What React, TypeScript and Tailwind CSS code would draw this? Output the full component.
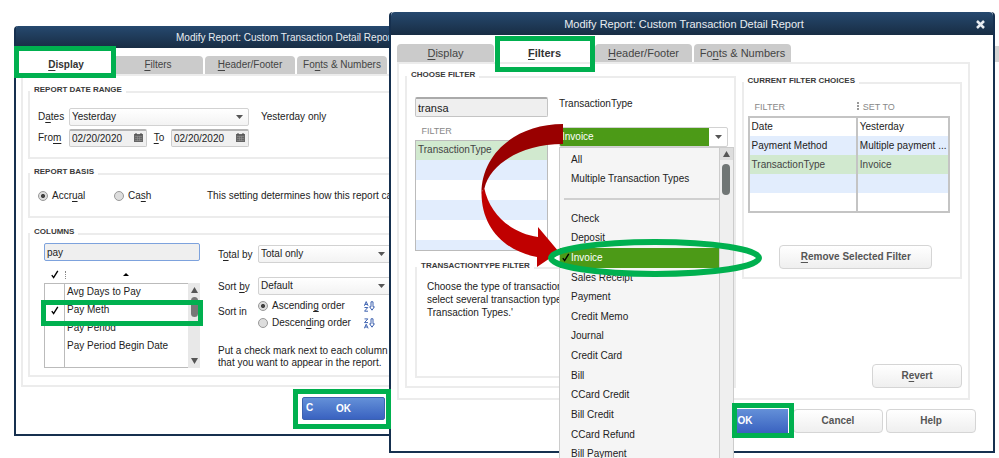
import type { ReactNode } from 'react'
import clsx from 'clsx'

interface GroupProps {
  title: string
  className?: string
  bodyClass: string
  children: ReactNode
}

function Group({ title, className = '', bodyClass, children }: GroupProps) {
  return (
    <fieldset className={clsx('min-w-0 border-2 border-[#ececec]', className)}>
      <legend className="px-1 pb-1 text-[8px] leading-3 font-bold text-[#3a3a3a]">{title}</legend>
      <div className={bodyClass}>{children}</div>
    </fieldset>
  )
}

// label text with its access key underlined
function Hot({ text, at }: { text: string; at: number }) {
  return (
    <>
      {text.slice(0, at)}
      <span className="underline underline-offset-2">{text[at]}</span>
      {text.slice(at + 1)}
    </>
  )
}

function Caret({ className = '' }: { className?: string }) {
  return (
    <svg viewBox="0 0 7 4" className={clsx('pointer-events-none h-1 w-[7px] fill-[#555]', className)}>
      <path d="M0 0h7L3.5 4z" />
    </svg>
  )
}

function Tick({ className = '' }: { className?: string }) {
  return (
    <svg viewBox="0 0 8 9" className={clsx('h-[9px] w-2 fill-none stroke-black', className)}>
      <path d="M.8 5.2 2.6 7.6 6.8.8" strokeWidth="1.4" />
    </svg>
  )
}

interface TabsProps {
  active: string
  tabClass: string
  frameClass: string
}

const tabs = [
  { label: 'Display', at: 0 },
  { label: 'Filters', at: 0 },
  { label: 'Header/Footer', at: 0 },
  { label: 'Fonts & Numbers', at: 2 },
]

function Tabs({ active, tabClass, frameClass }: TabsProps) {
  return (
    <div role="tablist" className="flex gap-0.5">
      {tabs.map((tab) => {
        const selected = tab.label === active
        return (
          <button
            key={tab.label}
            role="tab"
            aria-selected={selected}
            className={clsx(
              'relative shrink-0 rounded-t whitespace-nowrap',
              tabClass,
              selected ? 'bg-white font-bold text-[#333]' : 'bg-[#cbcbcb] text-[#444]'
            )}
          >
            <Hot text={tab.label} at={tab.at} />
            {selected && <span className={clsx('absolute z-20 border-5 border-[#00b04f]', frameClass)} />}
          </button>
        )
      })}
    </div>
  )
}

interface DropdownProps {
  id: string
  value: string
  className?: string
}

function Dropdown({ id, value, className = '' }: DropdownProps) {
  return (
    <div className={clsx('relative', className)}>
      <select
        id={id}
        className="h-[18px] w-full appearance-none rounded-xs border border-[#d2d2d2] bg-linear-to-b from-white to-[#f3f3f3] pl-0.5 text-[10px] leading-4 text-[#222]"
      >
        <option>{value}</option>
      </select>
      <Caret className="absolute top-[7px] right-1.5" />
    </div>
  )
}

function DateField({ id }: { id: string }) {
  return (
    <div className="relative w-[78px]">
      <input
        id={id}
        defaultValue="02/20/2020"
        className="h-[18px] w-full rounded-xs border border-t-2 border-[#ccc] border-t-[#b5b5b5] bg-[#f0f0f0] pl-0.5 text-[10px] text-[#222]"
      />
      <svg viewBox="0 0 9 9" className="absolute top-1 right-1 size-[9px]">
        <path d="M0 1h9v8H0z" fill="#666" />
        <path d="M2 0v2M7 0v2" stroke="#444" />
        <path d="M1 3.5h7M1 5.5h7M1 7.5h7M3.5 3v5M5.5 3v5" stroke="#999" strokeWidth=".5" />
      </svg>
    </div>
  )
}

interface RadioProps {
  name: string
  label: string
  at: number
  checked?: boolean
}

function Radio({ name, label, at, checked }: RadioProps) {
  return (
    <label className="flex items-center gap-1 whitespace-nowrap">
      <input
        type="radio"
        name={name}
        defaultChecked={checked}
        className="size-2.5 shrink-0 appearance-none rounded-full border border-[#999] bg-[#ddd] checked:bg-[radial-gradient(circle,#444_0_30%,#ddd_42%)]"
      />
      <span>
        <Hot text={label} at={at} />
      </span>
    </label>
  )
}

// small A/Z letters with a down arrow beside them
function SortIcon({ reverse }: { reverse?: boolean }) {
  const a = 'M.3 4.8 2.2.6 4.1 4.8M1 3.4h2.4'
  const z = 'M.5.9h3.3L.5 4.6h3.5'
  return (
    <svg viewBox="0 0 11 11" className="size-[11px] fill-none stroke-[#3f63b0]">
      <path d={reverse ? z : a} strokeWidth="1" />
      <path d={reverse ? a : z} strokeWidth="1" transform="translate(0 5.6)" />
      <path d="M7 .8h2v5h1.4L8 9.2 5.6 5.8H7z" strokeWidth="1" />
    </svg>
  )
}

interface PushButtonProps {
  children: ReactNode
  className?: string
}

function PushButton({ children, className = '' }: PushButtonProps) {
  return (
    <button
      className={clsx(
        'h-6 rounded-sm border border-[#d5d5d5] bg-linear-to-b from-white to-[#efefef] text-[10px] font-bold text-[#555]',
        className
      )}
    >
      {children}
    </button>
  )
}

const columns = [
  { name: 'Avg Days to Pay', checked: false },
  { name: 'Pay Meth', checked: true },
  { name: 'Pay Period', checked: false },
  { name: 'Pay Period Begin Date', checked: false },
]

function ColumnList() {
  return (
    <div className="relative mt-1.5">
      <table className="w-full border-collapse text-left">
        <thead>
          <tr className="h-4">
            <th className="w-5">
              <Tick className="mx-auto" />
            </th>
            <th>
              <div className="flex items-center gap-[57px] pr-3">
                <span className="h-2 border-l border-dotted border-[#888]" />
                <svg viewBox="0 0 6 3" className="h-[3px] w-1.5">
                  <path d="M0 3h6L3 0z" />
                </svg>
              </div>
            </th>
          </tr>
        </thead>
        <tbody className="border border-r-0 border-[#bbb]">
          {columns.map((column) => (
            <tr key={column.name} className="h-[18px]">
              <td className="border-r border-[#bbb]">{column.checked && <Tick className="mx-auto" />}</td>
              <td className="pl-0.5">{column.name}</td>
            </tr>
          ))}
          <tr className="h-3">
            <td className="border-r border-[#bbb]" />
            <td />
          </tr>
        </tbody>
      </table>
      <div className="absolute top-4 right-0 bottom-0 flex w-3 flex-col items-center justify-between bg-[#e8e8e8] py-1">
        <div className="flex flex-col items-center gap-1">
          <svg viewBox="0 0 7 6" className="h-1.5 w-[7px] fill-[#555]">
            <path d="M0 6h7L3.5 0z" />
          </svg>
          <span className="h-5 w-[7px] rounded-full bg-[#777]" />
        </div>
        <svg viewBox="0 0 7 6" className="h-1.5 w-[7px] fill-[#555]">
          <path d="M0 0h7L3.5 6z" />
        </svg>
      </div>
      <span className="absolute top-[33px] -right-[3px] -left-[3px] h-[26px] border-5 border-[#00b04f]" />
    </div>
  )
}

function DisplayWindow() {
  return (
    <section className="mt-3.5 min-w-0 rounded-tl border-b-2 border-l-2 border-[#16304f]">
      <header className="h-[22px] overflow-hidden rounded-tl-xs bg-linear-to-b from-[#26496f] to-[#182d44] pl-40 text-[10px] leading-6 whitespace-nowrap text-[#e8edf2]">
        Modify Report: Custom Transaction Detail Report
      </header>
      <div className="pt-2 pb-3.5 pl-[5px]">
        <Tabs
          active="Display"
          tabClass="h-[18px] w-[90px] text-[10px] leading-4"
          frameClass="-top-2.5 -left-[7px] h-8 w-[102px]"
        />
        <div className="overflow-hidden border-2 border-r-0 border-[#ececec] pt-2 pb-2 pl-[5px]">
          <Group title="REPORT DATE RANGE" className="border-r-0" bodyClass="pt-2 pb-2.5 pl-2">
            <div className="grid grid-cols-[31px_180px_1fr] items-center gap-y-[3px] whitespace-nowrap">
              <label htmlFor="dates">
                <Hot text="Dates" at={1} />
              </label>
              <Dropdown id="dates" value="Yesterday" />
              <span className="pl-3">Yesterday only</span>
              <label htmlFor="from">
                <Hot text="From" at={3} />
              </label>
              <div className="flex items-center justify-between">
                <DateField id="from" />
                <label htmlFor="to">
                  <Hot text="To" at={0} />
                </label>
                <DateField id="to" />
              </div>
            </div>
          </Group>
          <Group title="REPORT BASIS" className="mt-[7px] border-r-0" bodyClass="pt-2 pb-3.5 pl-2">
            <div className="grid grid-cols-[76px_93px_1fr] items-center whitespace-nowrap">
              <Radio name="basis" label="Accrual" at={4} checked />
              <Radio name="basis" label="Cash" at={2} />
              <span>This setting determines how this report calculates</span>
            </div>
          </Group>
          <Group title="COLUMNS" className="mt-2 border-r-0" bodyClass="pt-px pb-1.5 pl-3.5">
            <div className="grid grid-cols-[156px_1fr] gap-x-[18px]">
              <div>
                <input
                  aria-label="Search columns"
                  defaultValue="pay"
                  className="h-[18px] w-full rounded-xs border border-[#7da2dd] bg-[#efefef] pl-0.5 text-[10px] text-[#222]"
                />
                <ColumnList />
              </div>
              <div className="grid grid-cols-[40px_1fr] content-start whitespace-nowrap">
                <label htmlFor="total" className="mt-1 leading-4">
                  <Hot text="Total by" at={1} />
                </label>
                <Dropdown id="total" value="Total only" className="mt-0.5 -mr-0.5" />
                <label htmlFor="sort" className="mt-4 leading-4">
                  <Hot text="Sort by" at={5} />
                </label>
                <Dropdown id="sort" value="Default" className="mt-3.5 -mr-0.5" />
                <span className="self-center">Sort in</span>
                <div className="grid grid-cols-[106px_1fr] items-center gap-y-[5px] pt-[5px]">
                  <Radio name="order" label="Ascending order" at={8} checked />
                  <SortIcon />
                  <Radio name="order" label="Descending order" at={6} />
                  <SortIcon reverse />
                </div>
                <p className="col-span-2 mt-4 leading-3">
                  Put a check mark next to each column
                  <br />
                  that you want to appear in the report.
                </p>
              </div>
            </div>
          </Group>
        </div>
        <div className="mt-2.5 flex justify-end pr-1">
          <button className="relative h-[23px] w-[83px] rounded-xs border border-[#3c62b0] bg-linear-to-b from-[#6490d8] to-[#3a62c0] text-[10px] font-bold text-white">
            <span className="absolute top-1 left-[3px]">C</span>
            OK
            <span className="absolute -top-[9px] -right-[7px] -left-2.5 z-20 h-10 border-5 border-[#00b04f]" />
          </button>
        </div>
      </div>
    </section>
  )
}

const menu = [
  'All',
  'Multiple Transaction Types',
  '',
  'Check',
  'Deposit',
  'Invoice',
  'Sales Receipt',
  'Payment',
  'Credit Memo',
  'Journal',
  'Credit Card',
  'Bill',
  'CCard Credit',
  'Bill Credit',
  'CCard Refund',
  'Bill Payment',
]

function TypeMenu() {
  return (
    <div className="absolute top-5 -right-1.5 left-0 z-10 flex h-[318px] border border-[#ccc] bg-[#f5f5f5]">
      <ul role="listbox" aria-label="Transaction types" className="grid flex-1 auto-rows-fr pt-0.5">
        {menu.map((item, index) =>
          item === '' ? (
            <li key={index} role="separator" className="flex items-center pl-1">
              <span className="h-0.5 w-full bg-[#d0d0d0]" />
            </li>
          ) : (
            <li
              key={item}
              role="option"
              aria-selected={item === 'Invoice'}
              className={clsx(
                'relative flex items-center pl-[11px]',
                item === 'Invoice' ? 'bg-[#4c9a17] text-white' : 'text-[#222]'
              )}
            >
              {item === 'Invoice' && <Tick className="absolute left-0.5" />}
              {item}
            </li>
          )
        )}
      </ul>
      <div className="flex w-3.5 flex-col items-center gap-1 border-l border-[#ccc] bg-[#efefef]">
        <span className="flex h-3 w-full items-center justify-center bg-[#ddd]">
          <svg viewBox="0 0 7 6" className="h-1.5 w-[7px] fill-[#555]">
            <path d="M0 6h7L3.5 0z" />
          </svg>
        </span>
        <span className="h-[31px] w-2 rounded-full bg-[#707675]" />
      </div>
    </div>
  )
}

// red arrow from the combo box down to the chosen item, and the ring round it
function Pointer() {
  return (
    <svg viewBox="0 0 290 160" className="pointer-events-none absolute -top-1 -left-20 z-20 h-40 w-[290px]">
      <path
        d="M2.500 70C2.500 104 25 128 58 134V144L80 129 59 104V114C33 110 11 93 5 64Z"
        fill="#c00000"
      />
      <path d="M84 1C38 1 2 30 2.500 71C3 68 4 66 5.500 65C11 42 41 21 84 21Z" fill="#990000" />
      <ellipse cx="176" cy="135" rx="104" ry="16" fill="none" stroke="#00b04f" strokeWidth="6" />
    </svg>
  )
}

const choices = [
  { filter: 'Date', value: 'Yesterday' },
  { filter: 'Payment Method', value: 'Multiple payment ...' },
  { filter: 'TransactionType', value: 'Invoice' },
  { filter: '', value: '' },
  { filter: '', value: '' },
]

function ChoicesTable() {
  return (
    <table className="w-full table-fixed border-collapse text-left text-[#222]">
      <thead>
        <tr className="h-5 text-[9px] text-[#888]">
          <th className="w-[54%] pl-1.5 font-normal">FILTER</th>
          <th className="font-normal">
            <span className="mr-1 inline-block h-2 border-l-2 border-dotted border-[#999]" />
            SET TO
          </th>
        </tr>
      </thead>
      <tbody className="border-2 border-[#c4c4c4]">
        {choices.map((choice, index) => (
          <tr
            key={index}
            className={clsx(
              index % 2 === 1 && 'bg-[#e2edfd]',
              choice.filter === 'TransactionType' && 'bg-[#d1e9cf] text-[#444]'
            )}
          >
            <td className="h-[19px] border-r-2 border-[#c4c4c4] pl-0.5">{choice.filter}</td>
            <td className="pl-0.5 whitespace-nowrap">{choice.value}</td>
          </tr>
        ))}
      </tbody>
    </table>
  )
}

function FiltersWindow() {
  return (
    <section className="relative min-w-0 rounded-t border-2 border-t-0 border-[#16304f] bg-white">
      <header className="relative h-[23px] rounded-t bg-linear-to-b from-[#26496f] to-[#182d44] pr-4 text-center text-[11px] leading-6 text-[#e8edf2]">
        Modify Report: Custom Transaction Detail Report
        <button aria-label="Close" className="absolute top-2 right-2">
          <svg viewBox="0 0 9 9" className="size-[9px] stroke-[#e8edf2] stroke-[2.5]">
            <path d="M1 1l7 7M8 1 1 8" />
          </svg>
        </button>
      </header>
      <div className="pt-[9px] pr-[17px] pb-[18px] pl-1.5">
        <Tabs
          active="Filters"
          tabClass="h-[18px] w-[97px] text-[11px] leading-4"
          frameClass="-top-2 -left-px h-9 w-[100px]"
        />
        <div className="mr-1.5 grid grid-cols-[3fr_2fr] gap-1.5 border-2 border-[#ececec] px-1.5 pt-[5px] pb-2.5">
          <Group title="CHOOSE FILTER" bodyClass="pt-3 pr-1.5 pb-2 pl-2">
            <div className="grid grid-cols-[133px_minmax(0,1fr)] gap-x-[11px]">
              <div>
                <input
                  aria-label="Search filters"
                  defaultValue="transa"
                  className="h-5 w-full rounded-xs border border-t-2 border-[#c4c4c4] border-t-[#aaa] bg-[#efefef] pl-0.5 text-[11px] text-[#222]"
                />
                <table className="w-full border-collapse text-left">
                  <thead>
                    <tr className="h-[23px]">
                      <th className="pt-1.5 pl-1.5 text-[9px] font-normal text-[#888]">FILTER</th>
                    </tr>
                  </thead>
                  <tbody className="border border-[#bbb]">
                    <tr className="h-5 bg-[#d1e9cf]">
                      <td className="pl-0.5 text-[#444]">TransactionType</td>
                    </tr>
                    <tr className="h-5 bg-[#e2edfd]"><td /></tr>
                    <tr className="h-5"><td /></tr>
                    <tr className="h-5 bg-[#e2edfd]"><td /></tr>
                    <tr className="h-5"><td /></tr>
                    <tr className="h-2.5 bg-[#e2edfd]"><td /></tr>
                  </tbody>
                </table>
              </div>
              <div>
                <label htmlFor="type" className="block h-[30px] pt-px">
                  TransactionType
                </label>
                <div className="relative">
                  <select
                    id="type"
                    className="h-5 w-full appearance-none rounded-xs border border-[#d2d2d2] bg-linear-to-r from-[#4c9a17] from-[calc(100%-18px)] to-white to-[calc(100%-18px)] pl-0.5 text-[10px] text-white"
                  >
                    <option>Invoice</option>
                  </select>
                  <Caret className="absolute top-2 right-1.5" />
                  <TypeMenu />
                  <Pointer />
                </div>
              </div>
            </div>
            <Group title="TRANSACTIONTYPE FILTER" className="mt-[9px] h-[118px]" bodyClass="px-2.5 pt-1">
              <p className="leading-[13px] whitespace-nowrap">
                Choose the type of transaction
                <br />
                select several transaction types
                <br />
                Transaction Types.'
              </p>
            </Group>
          </Group>
          <div className="flex min-w-0 flex-col items-end justify-between pt-1.5">
            <Group title="CURRENT FILTER CHOICES" className="w-full" bodyClass="px-1 pt-1.5 pb-2">
              <div className="pr-1.5">
                <ChoicesTable />
              </div>
              <div className="mt-8 flex justify-center pl-2">
                <PushButton className="w-[153px]">
                  <Hot text="Remove Selected Filter" at={0} />
                </PushButton>
              </div>
            </Group>
            <PushButton className="w-[90px]">
              <Hot text="Revert" at={1} />
            </PushButton>
          </div>
        </div>
        <div className="mt-[9px] flex justify-end gap-[3px]">
          <button className="relative mr-0.5 h-6 w-[86px] bg-linear-to-b from-[#6490d8] to-[#3a62c0] text-[10px] font-bold text-white">
            OK
            <span className="absolute -top-1.5 -right-1.5 z-20 h-[35px] w-[62px] border-5 border-[#00b04f]" />
          </button>
          <PushButton className="w-[90px]">Cancel</PushButton>
          <PushButton className="w-[90px]">Help</PushButton>
        </div>
      </div>
    </section>
  )
}

export default function App() {
  return (
    <main className="grid h-screen grid-cols-[375px_minmax(0,1fr)_4px] items-start overflow-hidden bg-white pt-3 pl-3.5 font-['Liberation_Sans',Arial,sans-serif] text-[10px] leading-3 text-[#222]">
      <DisplayWindow />
      <FiltersWindow />
      <div className="mt-[34px] h-4 bg-[#d4d4d4]" />
    </main>
  )
}
